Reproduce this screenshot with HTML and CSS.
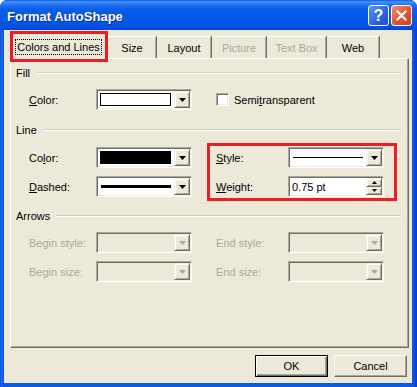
FILE: index.html
```html
<!DOCTYPE html>
<html lang="en">
<head>
    <meta charset="UTF-8">
    <meta name="viewport" content="width=device-width, initial-scale=1.0">
    <title>Format AutoShape</title>
    <link rel="stylesheet" href="styles.css">
</head>
<body>
    <div class="window">
        <!-- Title bar -->
        <div class="titlebar">
            <span class="title">Format AutoShape</span>
            <div class="title-buttons">
                <span class="tb-btn help">?</span>
                <span class="tb-btn close">
                    <svg width="11" height="11" viewBox="0 0 11 11"><path d="M1.5 1.5l8 8M9.5 1.5l-8 8" stroke="#fff" stroke-width="2.2" stroke-linecap="square"/></svg>
                </span>
            </div>
        </div>

        <div class="client">
            <!-- Tabs -->
            <div class="tabs">
                <div class="tab selected"><span class="focus">Colors and Lines</span></div>
                <div class="tab tab-size">Size</div>
                <div class="tab tab-layout">Layout</div>
                <div class="tab tab-picture disabled">Picture</div>
                <div class="tab tab-textbox disabled">Text Box</div>
                <div class="tab tab-web">Web</div>
            </div>

            <div class="panel">
                <!-- Fill -->
                <div class="heading"><span>Fill</span><span class="rule"></span></div>
                <div class="grid fill-row">
                    <label><u>C</u>olor:</label>
                    <div class="combo">
                        <div class="field"><span class="swatch"></span></div>
                        <span class="drop"><svg width="7" height="4" viewBox="0 0 7 4"><path d="M0 0h7L3.5 4z"/></svg></span>
                    </div>
                    <span></span>
                    <label class="check"><span class="box"></span><span>Semi<u>t</u>ransparent</span></label>
                </div>

                <!-- Line -->
                <div class="heading"><span>Line</span><span class="rule"></span></div>
                <div class="line-row">
                    <div class="pair-col">
                        <div class="pair">
                            <label>Co<u>l</u>or:</label>
                            <div class="combo">
                                <div class="field"><span class="swatch black"></span></div>
                                <span class="drop"><svg width="7" height="4" viewBox="0 0 7 4"><path d="M0 0h7L3.5 4z"/></svg></span>
                            </div>
                        </div>
                        <div class="pair">
                            <label><u>D</u>ashed:</label>
                            <div class="combo">
                                <div class="field"><span class="stroke thick"></span></div>
                                <span class="drop"><svg width="7" height="4" viewBox="0 0 7 4"><path d="M0 0h7L3.5 4z"/></svg></span>
                            </div>
                        </div>
                    </div>
                    <div class="highlight">
                        <div class="pair wide">
                            <label><u>S</u>tyle:</label>
                            <div class="combo">
                                <div class="field"><span class="stroke"></span></div>
                                <span class="drop"><svg width="7" height="4" viewBox="0 0 7 4"><path d="M0 0h7L3.5 4z"/></svg></span>
                            </div>
                        </div>
                        <div class="pair wide">
                            <label><u>W</u>eight:</label>
                            <div class="combo">
                                <div class="field text">0.75 pt</div>
                                <div class="spin">
                                    <span class="drop half"><svg width="5" height="3" viewBox="0 0 5 3"><path d="M2.5 0L5 3H0z"/></svg></span>
                                    <span class="drop half"><svg width="5" height="3" viewBox="0 0 5 3"><path d="M0 0h5L2.5 3z"/></svg></span>
                                </div>
                            </div>
                        </div>
                    </div>
                </div>

                <!-- Arrows -->
                <div class="heading"><span>Arrows</span><span class="rule"></span></div>
                <div class="grid arrow-rows">
                    <label class="off">Begin style:</label>
                    <div class="combo off">
                        <div class="field"></div>
                        <span class="drop"><svg width="7" height="4" viewBox="0 0 7 4"><path d="M0 0h7L3.5 4z"/></svg></span>
                    </div>
                    <span></span>
                    <label class="off">End style:</label>
                    <div class="combo off">
                        <div class="field"></div>
                        <span class="drop"><svg width="7" height="4" viewBox="0 0 7 4"><path d="M0 0h7L3.5 4z"/></svg></span>
                    </div>

                    <label class="off">Begin size:</label>
                    <div class="combo off">
                        <div class="field"></div>
                        <span class="drop"><svg width="7" height="4" viewBox="0 0 7 4"><path d="M0 0h7L3.5 4z"/></svg></span>
                    </div>
                    <span></span>
                    <label class="off">End size:</label>
                    <div class="combo off">
                        <div class="field"></div>
                        <span class="drop"><svg width="7" height="4" viewBox="0 0 7 4"><path d="M0 0h7L3.5 4z"/></svg></span>
                    </div>
                </div>
            </div>

            <!-- Dialog buttons -->
            <div class="footer">
                <button class="btn default">OK</button>
                <button class="btn">Cancel</button>
            </div>
        </div>
    </div>
</body>
</html>
```

FILE: styles.css
```css
* {
    box-sizing: border-box;
}

body {
    margin: 0;
    background-color: #fff;
    font-family: "Liberation Sans", Arial, sans-serif;
    font-size: 11px;
    color: #000;
}

.window {
    width: 417px;
    height: 387px;
    display: flex;
    flex-direction: column;
    background: linear-gradient(to right, #0a3fcf 0, #1d6cf5 1px, #0a5ae8 3px, #0a5ae8 413px, #0640d2 416px);
    border-radius: 7px 7px 0 0;
    overflow: hidden;
}

/* Title bar */
.titlebar {
    height: 30px;
    flex: none;
    display: flex;
    align-items: center;
    padding: 0 5px 0 7px;
    background: linear-gradient(#0b5be9 0, #4a97fc 2px, #2a77f6 4px, #0a5de9 9px, #0458e6 20px, #0451e0 27px, #0345d6 30px);
}

.title {
    color: #fff;
    font-size: 13px;
    font-weight: bold;
    text-shadow: 1px 1px #0a2a8a;
    padding-top: 2px;
}

.title-buttons {
    margin-left: auto;
    display: flex;
    gap: 2px;
    padding-top: 1px;
}

.tb-btn {
    width: 21px;
    height: 21px;
    border: 1px solid #fff;
    border-radius: 3px;
    display: flex;
    align-items: center;
    justify-content: center;
    color: #fff;
}

.help {
    background: linear-gradient(135deg, #5d93f5, #2b62e0 60%, #1f4fcf);
    font-size: 16px;
    font-weight: bold;
}

.close {
    background: linear-gradient(135deg, #f0926e, #e2542c 55%, #c8401d);
}

/* Client area */
.client {
    flex: 1;
    margin: 0 5px 4px 4px;
    background-color: #ece9d8;
    display: flex;
    flex-direction: column;
}

.tabs {
    display: flex;
    align-items: flex-end;
    height: 28px;
    padding-left: 6px;
}

.tab {
    height: 22px;
    display: flex;
    align-items: center;
    justify-content: center;
    padding-top: 2px;
    border-right: 1px solid #716f64;
    box-shadow: inset 0 1px #fff, inset -1px 0 #aca899;
    background-color: #ece9d8;
}

.tab.disabled {
    color: #aca899;
}

.tab.selected {
    position: relative;
    z-index: 1;
    width: 98px;
    height: 31px;
    margin-bottom: -4px;
    border: 3px solid #ed1c24;
    box-shadow: none;
    padding: 5px 3px 4px 2px;
    align-items: stretch;
}

.focus {
    flex: 1;
    display: flex;
    align-items: center;
    justify-content: center;
    outline: 1px dotted #000;
    outline-offset: -1px;
}

.tab-size { width: 49px; }
.tab-layout { width: 55px; }
.tab-picture { width: 55px; }
.tab-textbox { width: 60px; }
.tab-web { width: 53px; }

.panel {
    height: 290px;
    margin-left: 6px;
    margin-right: 3px;
    padding: 7px 7px 0 5px;
    border: 1px solid;
    border-color: #fff #716f64 #716f64 #fff;
    box-shadow: inset -1px -1px #aca899;
}

.heading {
    display: flex;
    align-items: center;
    height: 14px;
    line-height: 14px;
}

.rule {
    flex: 1;
    margin-left: 6px;
    border-top: 1px solid #d0d0bf;
    border-bottom: 1px solid #fff;
}

.grid {
    display: grid;
    grid-template-columns: 67px 96px 24px 72px 96px;
    grid-auto-rows: 21px;
    row-gap: 8px;
    margin-left: 13px;
    align-items: center;
}

.fill-row {
    margin-top: 9px;
    margin-bottom: 13px;
}

.check {
    grid-column: span 2;
    display: flex;
    align-items: center;
    gap: 5px;
}

.box {
    width: 13px;
    height: 13px;
    background-color: #fff;
    border: 1px solid;
    border-color: #aca899 #fff #fff #aca899;
    box-shadow: inset 1px 1px #716f64, inset -1px -1px #f1efe2;
}

.line-row {
    display: flex;
    align-items: center;
    margin: 6px 0 8px 13px;
}

.pair-col {
    display: flex;
    flex-direction: column;
    gap: 8px;
}

.pair {
    display: grid;
    grid-template-columns: 67px 96px;
    align-items: center;
}

.pair.wide {
    grid-template-columns: 72px 96px;
}

.highlight {
    margin-left: 15px;
    border: 3px solid #ed1c24;
    padding: 1px 10px 1px 6px;
    display: flex;
    flex-direction: column;
    gap: 8px;
}

.arrow-rows {
    margin-top: 9px;
}

label.off {
    color: #aca899;
}

/* Combo boxes */
.combo {
    width: 96px;
    height: 21px;
    display: flex;
    padding: 1px;
    background-color: #fff;
    border: 1px solid;
    border-color: #aca899 #fff #fff #aca899;
    box-shadow: inset 1px 1px #716f64, inset -1px -1px #f1efe2;
}

.combo.off {
    background-color: #ece9d8;
}

.field {
    flex: 1;
    display: flex;
    align-items: center;
    padding: 0 3px 0 2px;
}

.field.text {
    padding-left: 2px;
    padding-top: 1px;
}

.swatch {
    flex: 1;
    height: 13px;
    background-color: #fff;
    border: 1px solid #000;
}

.swatch.black {
    background-color: #000;
}

.stroke {
    flex: 1;
    height: 1px;
    background-color: #000;
    margin-left: 1px;
}

.stroke.thick {
    height: 3px;
}

.drop {
    width: 16px;
    flex: none;
    display: flex;
    align-items: center;
    justify-content: center;
    background-color: #ece9d8;
    border: 1px solid;
    border-color: #f1efe2 #716f64 #716f64 #f1efe2;
    box-shadow: inset 1px 1px #fff, inset -1px -1px #aca899;
}

.combo.off .drop path {
    fill: #aca899;
}

.spin {
    width: 16px;
    display: flex;
    flex-direction: column;
}

.drop.half {
    flex: 1;
}

/* Dialog buttons */
.footer {
    display: flex;
    justify-content: flex-end;
    gap: 6px;
    margin-top: 7px;
    padding-right: 5px;
}

.btn {
    width: 73px;
    height: 22px;
    font-family: inherit;
    font-size: 11px;
    color: #000;
    background-color: #ece9d8;
    border: 1px solid;
    border-color: #fff #716f64 #716f64 #fff;
    box-shadow: inset -1px -1px #aca899;
    padding: 0;
}

.btn.default {
    border-color: #000;
    box-shadow: inset 1px 1px #fff, inset -1px -1px #716f64, inset -2px -2px #aca899;
}
```
